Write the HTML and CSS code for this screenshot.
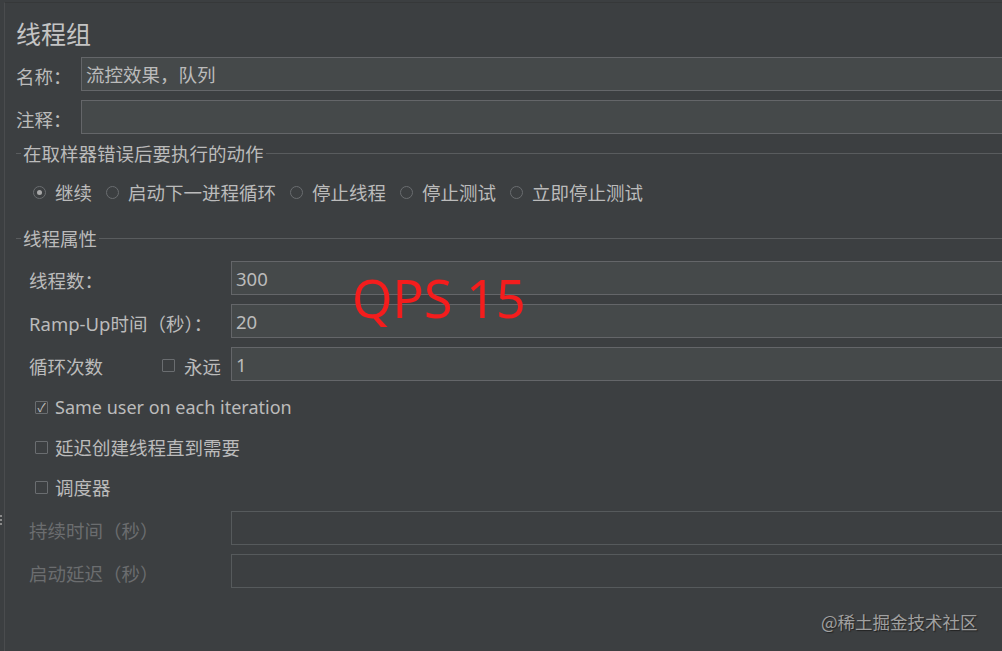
FILE: index.html
```html
<!DOCTYPE html>
<html lang="zh-CN">
<head>
  <meta charset="UTF-8">
  <meta name="viewport" content="width=device-width, initial-scale=1.0">
  <title>线程组</title>
  <link rel="stylesheet" href="styles.css">
</head>
<body>
  <div class="grip"></div>
  <div class="panel">
    <h2 class="title">线程组</h2>
    <div class="field">
      <label class="field-label">名称：</label>
      <div class="input">流控效果，队列</div>
    </div>
    <div class="field">
      <label class="field-label">注释：</label>
      <div class="input"></div>
    </div>

    <div class="group-title group-error"><span>在取样器错误后要执行的动作</span></div>
    <div class="radios">
      <div class="radio-item"><span class="radio checked"></span>继续</div>
      <div class="radio-item"><span class="radio"></span>启动下一进程循环</div>
      <div class="radio-item"><span class="radio"></span>停止线程</div>
      <div class="radio-item"><span class="radio"></span>停止测试</div>
      <div class="radio-item"><span class="radio"></span>立即停止测试</div>
    </div>

    <div class="group-title group-props"><span>线程属性</span></div>
    <div class="props">
      <div class="prop">
        <div class="prop-label">线程数：</div>
        <div class="input">300</div>
      </div>
      <div class="prop">
        <div class="prop-label">Ramp-Up时间（秒）：</div>
        <div class="input">20</div>
      </div>
      <div class="prop">
        <div class="prop-label">
          <span class="grow">循环次数</span>
          <span class="check"></span><span class="forever">永远</span>
        </div>
        <div class="input">1</div>
      </div>
    </div>

    <div class="checks">
      <div class="check-row"><span class="check checked">&#10003;</span><span class="latin">Same user on each iteration</span></div>
      <div class="check-row"><span class="check"></span>延迟创建线程直到需要</div>
      <div class="check-row"><span class="check"></span>调度器</div>
    </div>

    <div class="props disabled">
      <div class="prop">
        <div class="prop-label">持续时间（秒）</div>
        <div class="input"></div>
      </div>
      <div class="prop">
        <div class="prop-label">启动延迟（秒）</div>
        <div class="input"></div>
      </div>
    </div>

    <div class="qps">QPS 15</div>
    <div class="watermark">@稀土掘金技术社区</div>
  </div>
</body>
</html>
```

FILE: styles.css
```css
body {
  margin: 0;
  background: #3c3f41;
  color: #bbbbbb;
  font-family: "Noto Sans", "Noto Sans CJK SC", sans-serif;
  font-size: 18.5px;
  overflow: hidden;
}
.panel {
  position: relative;
  height: 648px;
  margin-top: 2px;
  margin-left: 4px;
  padding-left: 11px;
  border-top: 1px solid #363839;
  border-left: 1px solid #4a4c4e;
  overflow: hidden;
}
.title {
  margin: 0;
  padding-top: 15px;
  height: 30px;
  line-height: 30px;
  font-size: 25px;
  font-weight: normal;
  color: #c4c4c4;
  margin-bottom: 9px;
  font-family: "Noto Sans CJK SC", sans-serif;
}
.field {
  display: flex;
  align-items: center;
  height: 34px;
  margin-bottom: 9px;
}
.field-label {
  width: 65px;
  flex-shrink: 0;
  padding-top: 3px;
}
.input {
  flex: 1;
  height: 34px;
  box-sizing: border-box;
  border: 1px solid #646669;
  background: #45494a;
  margin-right: -10px;
  padding: 2px 0 0 4px;
  line-height: 30px;
  color: #bbbbbb;
}
.group-title {
  display: flex;
  align-items: center;
  height: 24px;
}
.group-title::before {
  content: "";
  width: 5px;
  border-top: 1px solid #595c5e;
  margin-right: 2px;
}
.group-title::after {
  content: "";
  flex: 1;
  border-top: 1px solid #595c5e;
  margin-left: 2px;
}
.group-error {
  margin-top: -2px;
}
.group-props {
  margin-top: 22px;
}
.radios {
  display: flex;
  height: 24px;
  align-items: center;
  margin-top: 15px;
  padding-left: 17px;
}
.radio-item {
  display: flex;
  align-items: center;
  margin-right: 14px;
}
.radio {
  width: 11px;
  height: 11px;
  border: 1px solid #6a6d70;
  border-radius: 50%;
  margin-right: 9px;
  display: flex;
  align-items: center;
  justify-content: center;
}
.radio.checked::after {
  content: "";
  width: 5px;
  height: 5px;
  border-radius: 50%;
  background: #a9a9a9;
}
.props {
  margin-top: 11px;
  padding-left: 13px;
}
.prop {
  display: flex;
  align-items: center;
  height: 34px;
  margin-bottom: 9px;
}
.prop-label {
  width: 202px;
  flex-shrink: 0;
  display: flex;
  align-items: center;
  padding-top: 3px;
}
.grow {
  flex: 1;
}
.forever {
  margin-left: 9px;
  margin-right: 10px;
}
.check {
  width: 11px;
  height: 11px;
  border: 1px solid #6a6d70;
  border-radius: 1px;
  font-size: 12px;
  line-height: 11px;
  text-align: center;
  color: #c0c0c0;
  flex-shrink: 0;
}
.checks {
  margin-top: -3px;
  padding-left: 19px;
}
.check-row {
  display: flex;
  align-items: center;
  height: 40px;
}
.check-row .check {
  margin-right: 7px;
}
.latin {
  font-size: 18px;
}
.disabled {
  margin-top: 4px;
}
.disabled .prop-label {
  color: #6b6d6f;
}
.disabled .input {
  background: #3c3f41;
  border-color: #565a5c;
}
.qps {
  position: absolute;
  left: 347px;
  top: 260px;
  font-size: 52px;
  color: #f41d1d;
  line-height: 70px;
}
.watermark {
  position: absolute;
  left: 816px;
  top: 606px;
  font-size: 17.5px;
  color: #a0a0a0;
  font-family: "Noto Sans CJK SC", sans-serif;
  text-shadow: 1px 1px 1px #222;
}
.grip {
  position: absolute;
  left: 0;
  top: 515px;
  width: 2px;
  height: 12px;
  background: repeating-linear-gradient(#8a8a8a 0 2px, transparent 2px 4px);
}
```
